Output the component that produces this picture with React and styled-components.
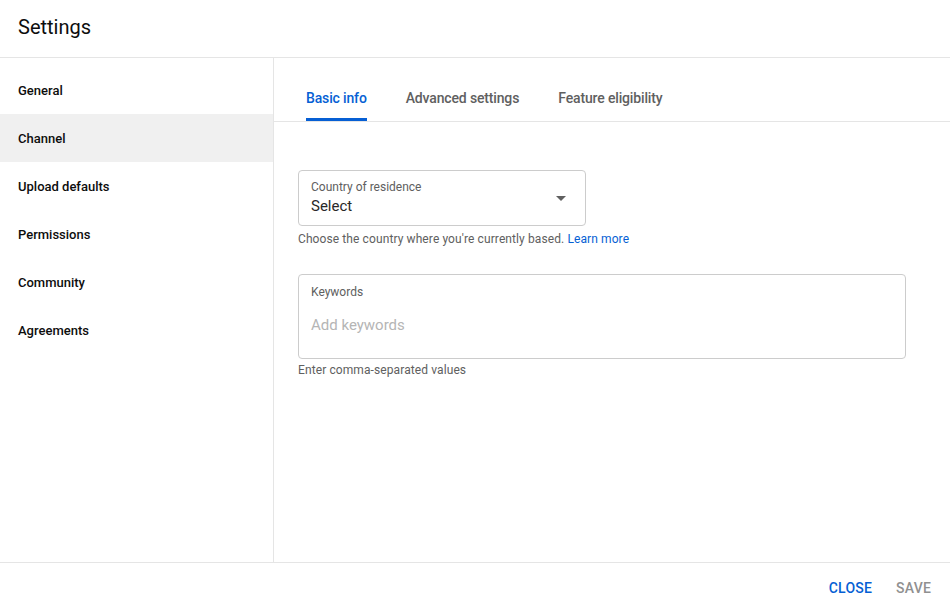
import styled, { createGlobalStyle } from "styled-components";

const GlobalStyle = createGlobalStyle`
  html, body {
    margin: 0;
    padding: 0;
    background: #fff;
    font-family: Roboto, "Noto Sans", Arial, sans-serif;
  }
  * { box-sizing: border-box; }
`;

const Dialog = styled.div`
  width: 950px;
  height: 608px;
  display: flex;
  flex-direction: column;
  background: #fff;
  color: #0d0d0d;
`;

const Header = styled.div`
  height: 58px;
  flex-shrink: 0;
  display: flex;
  align-items: center;
  padding: 0 18px 4px;
  border-bottom: 1px solid #e5e5e5;
`;

const Title = styled.h1`
  margin: 0;
  font-size: 20px;
  font-weight: 400;
  color: #0d0d0d;
`;

const Body = styled.div`
  flex: 1;
  display: flex;
  min-height: 0;
`;

const Sidebar = styled.nav`
  width: 274px;
  flex-shrink: 0;
  padding-top: 8px;
  border-right: 1px solid #e5e5e5;
`;

const NavItem = styled.div`
  height: 48px;
  display: flex;
  align-items: center;
  padding-left: 18px;
  font-size: 13px;
  font-weight: 500;
  color: #0d0d0d;
  background: ${(p) => (p.$active ? "#f0f0f0" : "transparent")};
`;

const Main = styled.div`
  flex: 1;
  display: flex;
  flex-direction: column;
`;

const Tabs = styled.div`
  height: 64px;
  display: flex;
  align-items: stretch;
  padding-left: 32px;
  border-bottom: 1px solid #e5e5e5;
`;

const Tab = styled.div`
  display: flex;
  align-items: flex-end;
  margin-right: 39px;
  padding-bottom: 12px;
  font-family: Roboto, sans-serif;
  font-size: 14px;
  font-weight: 500;
  letter-spacing: -0.15px;
  color: ${(p) => (p.$active ? "#065fd4" : "#606060")};
  border-bottom: 3px solid ${(p) => (p.$active ? "#065fd4" : "transparent")};
`;

const Content = styled.div`
  padding: 48px 24px 0;
  display: flex;
  flex-direction: column;
`;

const Field = styled.div`
  width: ${(p) => p.$width};
  height: ${(p) => p.$height};
  border: 1px solid #cccccc;
  border-radius: 4px;
  padding: 10px 12px;
  display: flex;
  align-items: ${(p) => (p.$select ? "center" : "stretch")};
  gap: 12px;
`;

const FieldText = styled.div`
  flex: 1;
  display: flex;
  flex-direction: column;
`;

const Label = styled.div`
  font-size: 12px;
  color: #606060;
  line-height: 15px;
`;

const Value = styled.div`
  font-size: 15px;
  line-height: 22px;
  color: ${(p) => (p.$placeholder ? "#b5b5b5" : "#282828")};
  margin-top: ${(p) => (p.$placeholder ? "14px" : "0")};
`;

const Arrow = styled.div`
  width: 0;
  height: 0;
  border-left: 5px solid transparent;
  border-right: 5px solid transparent;
  border-top: 5px solid #606060;
  margin-right: 7px;
`;

const Helper = styled.div`
  font-size: 12px;
  letter-spacing: 0.1px;
  color: #606060;
  margin-top: ${(p) => p.$top || "6px"};
  margin-bottom: ${(p) => p.$gap || "0"};
`;

const Link = styled.a`
  color: #065fd4;
  text-decoration: none;
`;

const Footer = styled.div`
  height: 46px;
  flex-shrink: 0;
  border-top: 1px solid #e5e5e5;
  display: flex;
  justify-content: flex-end;
  align-items: center;
  gap: 24px;
  padding-right: 19px;
  padding-top: 5px;
`;

const Button = styled.button`
  border: none;
  background: none;
  padding: 0;
  font-family: Roboto, sans-serif;
  font-size: 14px;
  font-weight: 500;
  letter-spacing: 0.2px;
  text-transform: uppercase;
  color: ${(p) => (p.$primary ? "#065fd4" : "#909090")};
`;

const navItems = [
  "General",
  "Channel",
  "Upload defaults",
  "Permissions",
  "Community",
  "Agreements",
];

export default function App() {
  return (
    <>
      <GlobalStyle />
      <Dialog>
        <Header>
          <Title>Settings</Title>
        </Header>
        <Body>
          <Sidebar>
            {navItems.map((item) => (
              <NavItem key={item} $active={item === "Channel"}>
                {item}
              </NavItem>
            ))}
          </Sidebar>
          <Main>
            <Tabs>
              <Tab $active>Basic info</Tab>
              <Tab>Advanced settings</Tab>
              <Tab>Feature eligibility</Tab>
            </Tabs>
            <Content>
              <Field $width="288px" $height="56px" $select>
                <FieldText>
                  <Label>Country of residence</Label>
                  <Value>Select</Value>
                </FieldText>
                <Arrow />
              </Field>
              <Helper $gap="28px">
                Choose the country where you're currently based.{" "}
                <Link href="#">Learn more</Link>
              </Helper>
              <Field $width="608px" $height="85px">
                <FieldText>
                  <Label>Keywords</Label>
                  <Value $placeholder>Add keywords</Value>
                </FieldText>
              </Field>
              <Helper $top="4px">Enter comma-separated values</Helper>
            </Content>
          </Main>
        </Body>
        <Footer>
          <Button $primary>Close</Button>
          <Button>Save</Button>
        </Footer>
      </Dialog>
    </>
  );
}
